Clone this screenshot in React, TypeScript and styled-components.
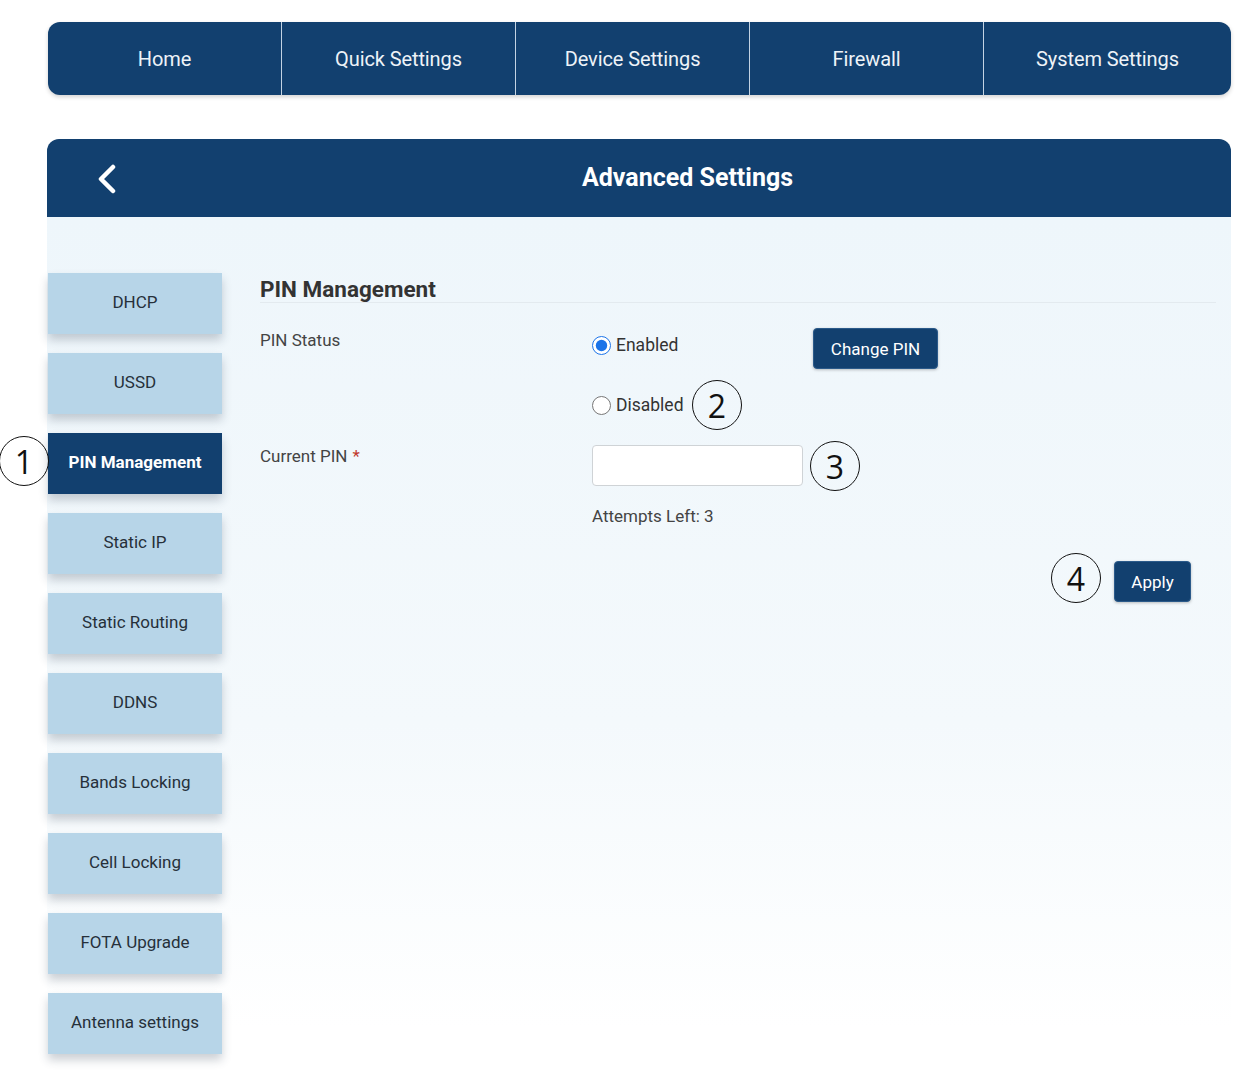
import styled, { createGlobalStyle } from "styled-components";

const GlobalStyle = createGlobalStyle`
  body {
    margin: 0;
    background: #ffffff;
    font-family: Roboto, "Liberation Sans", sans-serif;
  }
`;

const navy = "#12406f";

const Page = styled.div`
  position: relative;
  width: 1238px;
  box-sizing: border-box;
  padding: 22px 7px 20px 47px;
`;

const NavBar = styled.nav`
  display: grid;
  grid-template-columns: repeat(4, 234px) 1fr;
  height: 73px;
  margin-left: 1px;
  background: ${navy};
  border-radius: 12px;
  box-shadow: 0 2px 4px rgba(0, 0, 0, 0.18);
  overflow: hidden;
`;

const NavItem = styled.div<{ $last?: boolean }>`
  display: flex;
  align-items: center;
  justify-content: center;
  color: #eef3f8;
  font-size: 20px;
  letter-spacing: -0.1px;
  border-right: ${(p) => (p.$last ? "none" : "1.5px solid #c3d3e3")};
`;

const Header = styled.header`
  display: flex;
  align-items: center;
  height: 78px;
  margin-top: 44px;
  padding-left: 48px;
  background: ${navy};
  border-radius: 12px 12px 0 0;
`;

const BackButton = styled.div`
  display: flex;
  width: 24px;
  height: 30px;
  margin-top: 2px;
`;

const Title = styled.h1`
  flex: 1;
  margin: 0 0 2px;
  padding-left: 25px;
  text-align: center;
  color: #ffffff;
  font-size: 25px;
  font-weight: 700;
`;

const Panel = styled.section`
  display: flex;
  gap: 38px;
  padding: 56px 15px 8px 1px;
  background: linear-gradient(180deg, #eef6fb 0%, #f4f9fc 60%, #ffffff 96%);
`;

const Sidebar = styled.div`
  display: flex;
  flex-direction: column;
  gap: 19px;
  width: 174px;
  flex-shrink: 0;
`;

const SideButton = styled.div<{ $active?: boolean }>`
  display: flex;
  align-items: center;
  justify-content: center;
  height: 61px;
  box-sizing: border-box;
  padding-bottom: 3px;
  background: ${(p) => (p.$active ? navy : "#b7d5e8")};
  color: ${(p) => (p.$active ? "#ffffff" : "#26303a")};
  font-size: 17px;
  font-weight: ${(p) => (p.$active ? 700 : 400)};
  box-shadow: 0 6px 9px rgba(40, 60, 80, 0.24);
`;

const Content = styled.div`
  flex: 1;
  display: flex;
  flex-direction: column;
`;

const Heading = styled.h2`
  margin: 0;
  padding-top: 3px;
  font-size: 22.5px;
  line-height: 26px;
  font-weight: 700;
  color: #333;
  border-bottom: 1px solid #e3eaef;
`;

const FormRow = styled.div<{ $top: number }>`
  display: grid;
  grid-template-columns: 331px 222px auto;
  margin-top: ${(p) => p.$top}px;
`;

const Label = styled.div<{ $pad: number }>`
  padding-top: ${(p) => p.$pad}px;
  font-size: 17px;
  line-height: 20px;
  color: #444;
`;

const Star = styled.span`
  color: #c0392b;
  margin-left: 5px;
`;

const RadioGroup = styled.div`
  display: flex;
  flex-direction: column;
  gap: 40px;
  padding-top: 7px;
`;

const RadioLabel = styled.label`
  display: flex;
  align-items: center;
  height: 20px;
  font-size: 17.5px;
  color: #333;
`;

const Radio = styled.input`
  width: 19px;
  height: 19px;
  margin: 0 5px 0 1px;
  accent-color: #1a73e8;
`;

const NavyButton = styled.button<{ $w: number }>`
  width: ${(p) => p.$w}px;
  height: 41px;
  background: ${navy};
  color: #ffffff;
  border: 1px solid #2b5a8a;
  border-radius: 4px;
  font-family: Roboto, "Liberation Sans", sans-serif;
  font-size: 17px;
  box-shadow: 0 1px 3px rgba(0, 0, 0, 0.25);
`;

const PinInput = styled.input`
  width: 211px;
  height: 41px;
  margin-left: 1px;
  box-sizing: border-box;
  border: 1px solid #cfd3d6;
  border-radius: 4px;
  background: #ffffff;
`;

const Hint = styled.div`
  margin: 20px 0 0 332px;
  font-size: 17px;
  line-height: 20px;
  color: #444;
`;

const ApplyRow = styled.div`
  display: flex;
  justify-content: flex-end;
  margin-top: 35px;
  padding-right: 25px;
`;

const Marker = styled.div`
  position: absolute;
  width: 48px;
  height: 48px;
  margin: -25px 0 0 -25px;
  display: flex;
  align-items: center;
  justify-content: center;
  border: 1.5px solid #111;
  border-radius: 50%;
  font-family: "Open Sans", "DejaVu Sans", sans-serif;
  font-size: 32px;
  color: #111;
`;

const navItems = ["Home", "Quick Settings", "Device Settings", "Firewall", "System Settings"];

const sideItems = [
  "DHCP",
  "USSD",
  "PIN Management",
  "Static IP",
  "Static Routing",
  "DDNS",
  "Bands Locking",
  "Cell Locking",
  "FOTA Upgrade",
  "Antenna settings",
];

const markers = [
  { n: 1, x: 24, y: 461 },
  { n: 2, x: 717, y: 405 },
  { n: 3, x: 835, y: 466 },
  { n: 4, x: 1076, y: 578 },
];

export default function App() {
  return (
    <Page>
      <GlobalStyle />
      <NavBar>
        {navItems.map((item, i) => (
          <NavItem key={item} $last={i === navItems.length - 1}>
            {item}
          </NavItem>
        ))}
      </NavBar>

      <Header>
        <BackButton>
          <svg width="24" height="30" viewBox="0 0 24 30">
            <path
              d="M18 3 L6 15 L18 27"
              fill="none"
              stroke="#ffffff"
              strokeWidth="4.5"
              strokeLinecap="round"
              strokeLinejoin="round"
            />
          </svg>
        </BackButton>
        <Title>Advanced Settings</Title>
      </Header>

      <Panel>
        <Sidebar>
          {sideItems.map((item) => (
            <SideButton key={item} $active={item === "PIN Management"}>
              {item}
            </SideButton>
          ))}
        </Sidebar>

        <Content>
          <Heading>PIN Management</Heading>

          <FormRow $top={25}>
            <Label $pad={2}>PIN Status</Label>
            <RadioGroup>
              <RadioLabel>
                <Radio type="radio" name="pin" defaultChecked />
                Enabled
              </RadioLabel>
              <RadioLabel>
                <Radio type="radio" name="pin" />
                Disabled
              </RadioLabel>
            </RadioGroup>
            <div>
              <NavyButton $w={125}>Change PIN</NavyButton>
            </div>
          </FormRow>

          <FormRow $top={30}>
            <Label $pad={1}>
              Current PIN<Star>*</Star>
            </Label>
            <PinInput type="password" />
          </FormRow>

          <Hint>Attempts Left: 3</Hint>

          <ApplyRow>
            <NavyButton $w={77}>Apply</NavyButton>
          </ApplyRow>
        </Content>
      </Panel>

      {markers.map((m) => (
        <Marker key={m.n} style={{ left: m.x, top: m.y }}>
          {m.n}
        </Marker>
      ))}
    </Page>
  );
}
